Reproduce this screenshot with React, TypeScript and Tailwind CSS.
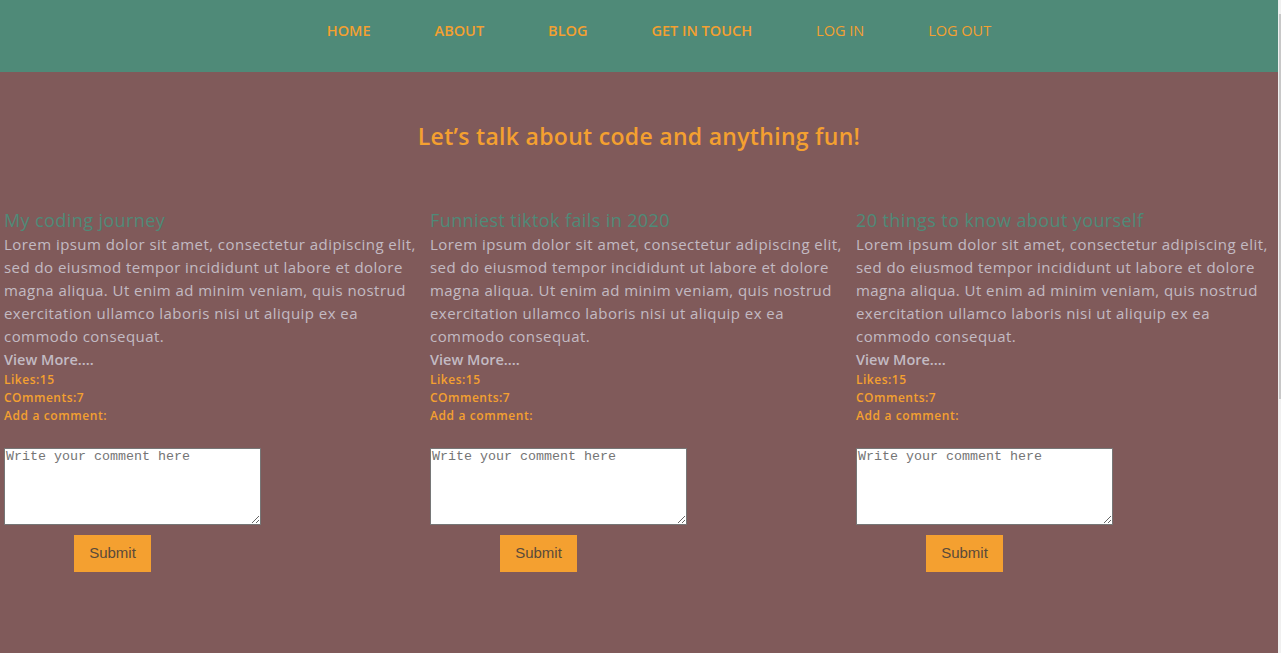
import React from "react";

const posts = [
  "My coding journey",
  "Funniest tiktok fails in 2020",
  "20 things to know about yourself",
];

const lorem =
  "Lorem ipsum dolor sit amet, consectetur adipiscing elit, sed do eiusmod tempor incididunt ut labore et dolore magna aliqua. Ut enim ad minim veniam, quis nostrud exercitation ullamco laboris nisi ut aliquip ex ea commodo consequat.";

function Post({ title }: { title: string }) {
  return (
    <div className="flex flex-col pl-1 pr-2">
      <h2 className="text-[18px] leading-[26px] tracking-[0.4px] text-[#4f8a78] font-medium">{title}</h2>
      <p className="text-[15px] leading-[23px] tracking-[0.45px] text-[#c3bac3]">{lorem}</p>
      <p className="text-[14.5px] leading-[23px] text-[#c3bac3] font-semibold">View More....</p>
      <p className="text-[12px] leading-[18px] tracking-[0.5px] text-[#f4a030] font-semibold">Likes:15</p>
      <p className="text-[12px] leading-[18px] tracking-[0.5px] text-[#f4a030] font-semibold">COmments:7</p>
      <p className="text-[12px] leading-[18px] tracking-[0.6px] text-[#f4a030] font-semibold">Add a comment:</p>
      <textarea
        placeholder="Write your comment here"
        className="mt-[23px] w-[257px] h-[77px] bg-white border border-[#767676] px-[1px] py-0 text-[13.33px] leading-[16px] placeholder:text-[#757575] resize-y"
        style={{ fontFamily: '"Liberation Mono", monospace' }}
      />
      <div className="mt-[10px] pl-[70px]">
        <button
          className="w-[77px] h-[37px] bg-[#f4a030] text-[#5a4a3a] text-[15px]"
          style={{ fontFamily: '"Liberation Sans", Arial, sans-serif' }}
        >
          Submit
        </button>
      </div>
    </div>
  );
}

export default function App() {
  return (
    <div
      className="flex w-full h-[653px] overflow-hidden"
      style={{ fontFamily: '"Open Sans", "Noto Sans", sans-serif' }}
    >
      <div className="flex-1 flex flex-col bg-[#805a5a]">
        <nav className="h-[72px] bg-[#4f8a78] flex justify-center pt-[20px]">
          <ul className="flex gap-[64px] pl-10 text-[14.5px] leading-[22px] text-[#f4a030]">
            <li className="font-semibold">HOME</li>
            <li className="font-semibold">ABOUT</li>
            <li className="font-semibold">BLOG</li>
            <li className="font-semibold">GET IN TOUCH</li>
            <li>LOG IN</li>
            <li>LOG OUT</li>
          </ul>
        </nav>
        <h1 className="mt-[49px] text-center text-[23px] leading-[30px] tracking-[0.3px] font-semibold text-[#f4a030]">
          Let’s talk about code and anything fun!
        </h1>
        <div className="mt-[56px] grid grid-cols-3">
          {posts.map((t) => (
            <Post key={t} title={t} />
          ))}
        </div>
      </div>
      <div className="w-[3px] bg-[#f0f0f0] flex justify-end">
        <div className="w-[2px] h-[385px] mt-[14px] bg-[#c8c8c8]" />
      </div>
    </div>
  );
}
